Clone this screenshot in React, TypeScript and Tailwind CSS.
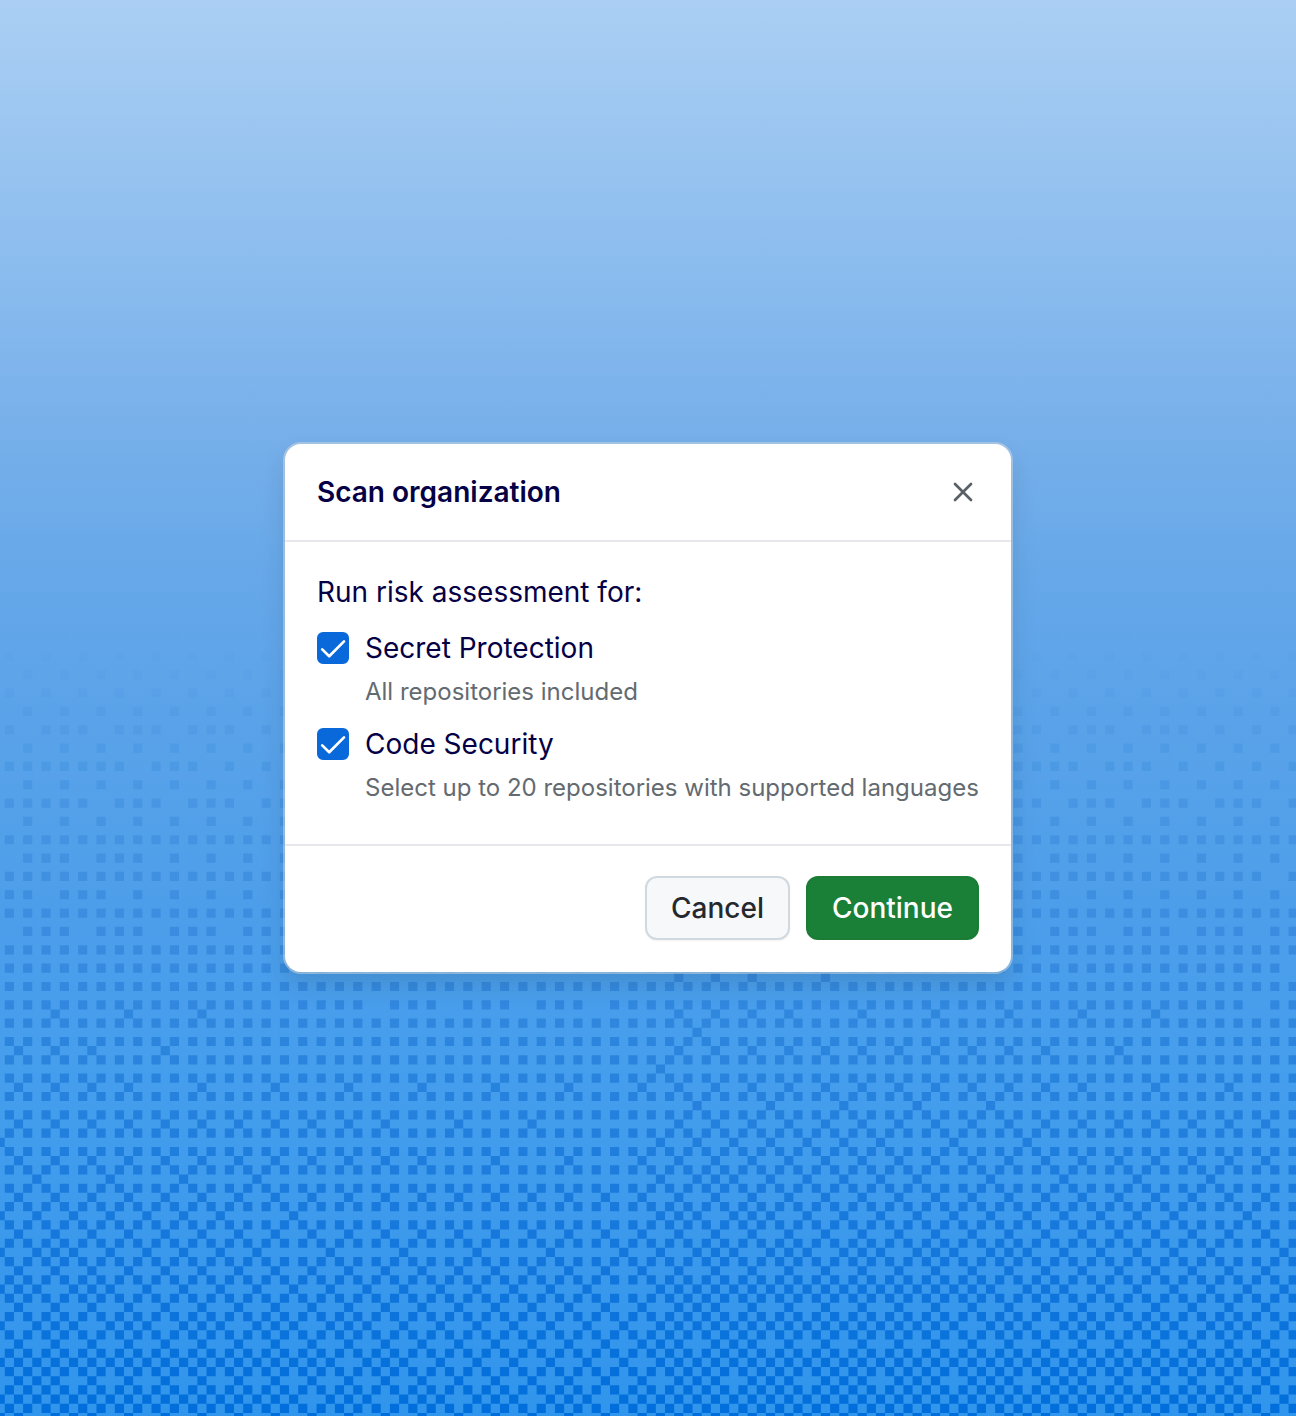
import { X } from 'lucide-react';
import { useState } from 'react';

const WIDTH = 1296;
const HEIGHT = 1416;
const CELL = 9.17;
const ORIGIN_X = -4.4;
const ORIGIN_Y = 0.7;
const FIRST_ROW = 69;

// Order in which the cells of an 8x8 tile are filled as the pattern gets denser.
// Cells with a mixed parity stay empty, which leaves a checkerboard at most.
const QUAD_RANK: Record<string, number> = {
  '3,1': 0,
  '1,3': 1,
  '3,3': 2,
  '1,1': 3,
  '2,2': 4,
  '0,0': 5,
  '0,2': 6,
  '2,0': 7,
};

// The cell of each group that is filled first, as [row, column] in the tile.
const SEEDS: Record<string, [number, number]> = {
  '3,1': [7, 1],
  '1,3': [5, 3],
  '3,3': [7, 7],
  '1,1': [5, 5],
  '2,2': [6, 6],
  '0,0': [0, 4],
  '0,2': [0, 6],
  '2,0': [6, 4],
};

const threshold = (row: number, col: number) => {
  const key = `${row % 4},${col % 4}`;
  const rank = QUAD_RANK[key];
  if (rank === undefined) return Infinity;
  const [seedRow, seedCol] = SEEDS[key];
  const sameRow = row % 8 === seedRow;
  const sameCol = col % 8 === seedCol;
  const step = sameRow ? (sameCol ? 0 : 3) : sameCol ? 2 : 1;
  return rank * 4 + step;
};

type Stop = [number, number];

const ROW_LEVELS: Stop[] = [
  [69, 7.5],
  [75, 9],
  [85, 10.8],
  [97, 13.9],
  [110, 17.5],
  [132, 23.4],
  [155, 30],
];

const COLUMN_SHIFTS: Stop[] = [
  [0, 0],
  [130, -0.7],
  [300, -2.2],
  [450, -3],
  [640, -4],
  [655, 2.3],
  [700, 2.3],
  [733, 1.8],
  [843, 1.2],
  [895, 0.5],
  [1000, 0],
  [1230, -2],
  [1296, -2.6],
];

const interpolate = (stops: Stop[], at: number) => {
  const next = stops.findIndex(([position]) => position > at);
  if (next === 0) return stops[0][1];
  if (next === -1) return stops[stops.length - 1][1];
  const [x0, y0] = stops[next - 1];
  const [x1, y1] = stops[next];
  return y0 + ((at - x0) / (x1 - x0)) * (y1 - y0);
};

const buildDither = () => {
  const parts: string[] = [];
  for (let row = FIRST_ROW; ORIGIN_Y + row * CELL < HEIGHT; row += 1) {
    for (let col = 0; ORIGIN_X + col * CELL < WIDTH; col += 1) {
      const x = ORIGIN_X + col * CELL;
      const level = interpolate(ROW_LEVELS, row) + interpolate(COLUMN_SHIFTS, x + CELL / 2);
      if (threshold(row, col) < level) {
        const y = ORIGIN_Y + row * CELL;
        parts.push(`M${x.toFixed(2)} ${y.toFixed(2)}h${CELL}v${CELL}h-${CELL}z`);
      }
    }
  }
  return parts.join('');
};

const DITHER_PATH = buildDither();

const Backdrop = () => (
  <svg
    aria-hidden="true"
    viewBox={`0 0 ${WIDTH} ${HEIGHT}`}
    preserveAspectRatio="xMidYMid slice"
    className="absolute inset-0 size-full"
  >
    <defs>
      <linearGradient id="sky" x1="0" y1="0" x2="0" y2={HEIGHT} gradientUnits="userSpaceOnUse">
        <stop offset="0" stopColor="#abcff4" />
        <stop offset="0.07" stopColor="#9fc8f1" />
        <stop offset="0.2" stopColor="#89bbee" />
        <stop offset="0.31" stopColor="#76afea" />
        <stop offset="0.4" stopColor="#67a8e9" />
        <stop offset="0.5" stopColor="#5ba3e9" />
        <stop offset="0.64" stopColor="#4d9eea" />
        <stop offset="0.76" stopColor="#459eed" />
        <stop offset="0.88" stopColor="#3b99ec" />
        <stop offset="1" stopColor="#3095ec" />
      </linearGradient>
      <linearGradient id="dots" x1="0" y1="0" x2="0" y2={HEIGHT} gradientUnits="userSpaceOnUse">
        <stop offset="0.45" stopColor="#61a5e9" />
        <stop offset="0.54" stopColor="#4c99e4" />
        <stop offset="0.64" stopColor="#3d8ee0" />
        <stop offset="0.75" stopColor="#2a84dd" />
        <stop offset="0.87" stopColor="#1678dc" />
        <stop offset="1" stopColor="#006edb" />
      </linearGradient>
    </defs>
    <rect width={WIDTH} height={HEIGHT} fill="url(#sky)" />
    <path d={DITHER_PATH} fill="url(#dots)" />
  </svg>
);

interface ProductOptionProps {
  id: string;
  label: string;
  description: string;
}

const ProductOption = ({ id, label, description }: ProductOptionProps) => {
  const [checked, setChecked] = useState(true);

  return (
    <div className="mt-4 flex gap-4">
      <span className="mt-1 grid size-8 shrink-0">
        <input
          id={id}
          type="checkbox"
          checked={checked}
          onChange={(event) => setChecked(event.target.checked)}
          aria-describedby={`${id}-description`}
          className="peer col-start-1 row-start-1 size-8 appearance-none rounded-md border-2 border-[#818b98] bg-white checked:border-[#0969da] checked:bg-[#0969da]"
        />
        <svg
          aria-hidden="true"
          viewBox="0 0 32 32"
          fill="none"
          className="pointer-events-none invisible col-start-1 row-start-1 size-8 stroke-white peer-checked:visible"
        >
          <path d="M5.2 17.4 12.2 24.2 27 9.4" strokeWidth="2.7" strokeLinecap="round" strokeLinejoin="round" />
        </svg>
      </span>
      <div>
        <label htmlFor={id} className="block text-[28px] leading-10 text-[#050045]">
          {label}
        </label>
        <p id={`${id}-description`} className="mt-2 text-2xl leading-8 text-[#636a70]">
          {description}
        </p>
      </div>
    </div>
  );
};

const App = () => (
  <main className="relative flex min-h-screen items-center justify-center overflow-hidden px-6 font-['Inter',sans-serif]">
    <Backdrop />
    <section
      role="dialog"
      aria-labelledby="scan-title"
      className="relative w-full max-w-[726px] rounded-2xl bg-white shadow-[0_0_0_2px_rgba(209,217,224,0.5),0_12px_24px_rgba(37,41,46,0.14)]"
    >
      <header className="flex items-center justify-between border-b-2 border-[#e6e8eb] px-8 py-7">
        <h1 id="scan-title" className="text-[28px] leading-10 font-semibold text-[#050045]">
          Scan organization
        </h1>
        <button type="button" aria-label="Close" className="text-[#596067]">
          <X className="size-8" strokeWidth={2} />
        </button>
      </header>
      <div className="border-b-2 border-[#e6e8eb] px-8 pt-[30px] pb-10">
        <p className="text-[28px] leading-10 text-[#050045]">Run risk assessment for:</p>
        <ProductOption id="secret-protection" label="Secret Protection" description="All repositories included" />
        <ProductOption
          id="code-security"
          label="Code Security"
          description="Select up to 20 repositories with supported languages"
        />
      </div>
      <footer className="flex justify-end gap-4 px-8 pt-[30px] pb-8 text-[28px] leading-[60px]">
        <button
          type="button"
          className="rounded-xl border-2 border-[#d1d9e0] bg-[#f6f8fa] px-6 font-medium text-[#25292e] shadow-xs"
        >
          Cancel
        </button>
        <button
          type="button"
          className="rounded-xl border-2 border-[#1a7c35] bg-[#1a7f37] px-6 font-medium text-white"
        >
          Continue
        </button>
      </footer>
    </section>
  </main>
);

export default App;
